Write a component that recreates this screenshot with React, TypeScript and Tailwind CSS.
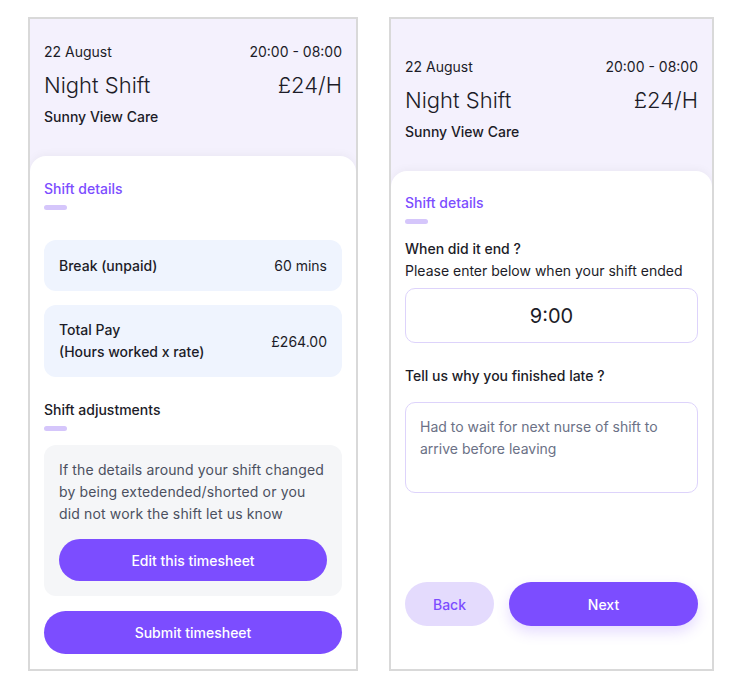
import React from "react";

const font = { fontFamily: "Inter, 'Noto Sans', sans-serif" };

function Header({ top }: { top: string }) {
  return (
    <div className={`bg-[#f4f1fd] px-[14px] ${top} pb-[29px] text-[#1c1c28]`}>
      <div className="flex justify-between text-[14px] leading-[20px]">
        <span>22 August</span>
        <span>20:00 - 08:00</span>
      </div>
      <div className="mt-[9px] flex justify-between text-[22px] leading-[28px] font-light">
        <span>Night Shift</span>
        <span>£24/H</span>
      </div>
      <div className="mt-[8px] text-[14px] leading-[20px] font-medium">Sunny View Care</div>
    </div>
  );
}

function SectionTitle({ title, purple }: { title: string; purple?: boolean }) {
  return (
    <div>
      <div
        className={`text-[14px] leading-[20px] font-medium ${
          purple ? "text-[#7c4dff]" : "text-[#1c1c28]"
        }`}
      >
        {title}
      </div>
      <div className="mt-[6px] h-[5px] w-[23px] rounded-full bg-[#d5c6fb]" />
    </div>
  );
}

function TimesheetSummary() {
  return (
    <div className="flex h-[654px] w-[330px] flex-col overflow-hidden border-2 border-[#d9d9d9] bg-[#f4f1fd]">
      <Header top="pt-[23px]" />
      <div className="flex flex-1 flex-col rounded-t-[16px] bg-white px-[14px] pt-[23px] shadow-[0_-2px_8px_rgba(0,0,0,0.04)]">
        <SectionTitle title="Shift details" purple />

        <div className="mt-[30px] flex h-[51px] items-center justify-between rounded-[12px] bg-[#eff4fe] px-[15px] text-[14px] text-[#1c1c28]">
          <span className="font-medium">Break (unpaid)</span>
          <span>60 mins</span>
        </div>

        <div className="mt-[14px] flex h-[72px] items-center justify-between rounded-[12px] bg-[#eff4fe] px-[15px] text-[14px] text-[#1c1c28]">
          <span className="font-medium leading-[22px]">
            Total Pay
            <br />
            (Hours worked x rate)
          </span>
          <span>£264.00</span>
        </div>

        <div className="mt-[23px]">
          <SectionTitle title="Shift adjustments" />
        </div>

        <div className="mt-[14px] rounded-[12px] bg-[#f5f6f8] px-[15px] pt-[14px] pb-[15px]">
          <p className="text-[14px] leading-[22px] tracking-[0.15px] text-[#4b5060]">
            If the details around your shift changed
            <br />
            by being extedended/shorted or you
            <br />
            did not work the shift let us know
          </p>
          <button className="mt-[14px] h-[42px] w-full rounded-full bg-[#7c4dff] text-[14px] font-medium text-white">
            Edit this timesheet
          </button>
        </div>

        <button className="mt-[15px] h-[43px] w-full rounded-full bg-[#7c4dff] text-[14px] font-medium text-white">
          Submit timesheet
        </button>
      </div>
    </div>
  );
}

function FinishedLate() {
  return (
    <div className="flex h-[654px] w-[325px] flex-col overflow-hidden border-2 border-[#d9d9d9] bg-[#f4f1fd]">
      <Header top="pt-[38px]" />
      <div className="flex flex-1 flex-col rounded-t-[16px] bg-white px-[14px] pt-[22px] pb-[43px] shadow-[0_-2px_8px_rgba(0,0,0,0.04)]">
        <SectionTitle title="Shift details" purple />

        <div className="mt-[15px] text-[14px] leading-[20px] font-medium text-[#1c1c28]">When did it end ?</div>
        <div className="mt-[2px] text-[14px] leading-[20px] text-[#1c1c28]">
          Please enter below when your shift ended
        </div>

        <div className="mt-[7px] flex h-[55px] items-center justify-center rounded-[10px] border border-[#ddd3fb] text-[20px] text-[#1c1c28]">
          9:00
        </div>

        <div className="mt-[23px] text-[14px] leading-[20px] font-medium text-[#1c1c28]">
          Tell us why you finished late ?
        </div>

        <div className="mt-[16px] h-[91px] rounded-[10px] border border-[#ddd3fb] px-[14px] pt-[13px] text-[14px] leading-[22px] text-[#6b7186]">
          Had to wait for next nurse of shift to arrive before leaving
        </div>

        <div className="mt-auto flex gap-[15px]">
          <button className="h-[44px] w-[89px] rounded-full bg-[#e4dbfd] text-[14px] font-medium text-[#7c4dff]">
            Back
          </button>
          <button className="h-[44px] flex-1 rounded-full bg-[#7c4dff] text-[14px] font-medium text-white shadow-[0_6px_14px_rgba(124,77,255,0.2)]">
            Next
          </button>
        </div>
      </div>
    </div>
  );
}

export default function App() {
  return (
    <div className="flex h-[686px] w-[744px] gap-[31px] bg-white pl-[28px] pt-[17px]" style={font}>
      <TimesheetSummary />
      <FinishedLate />
    </div>
  );
}
